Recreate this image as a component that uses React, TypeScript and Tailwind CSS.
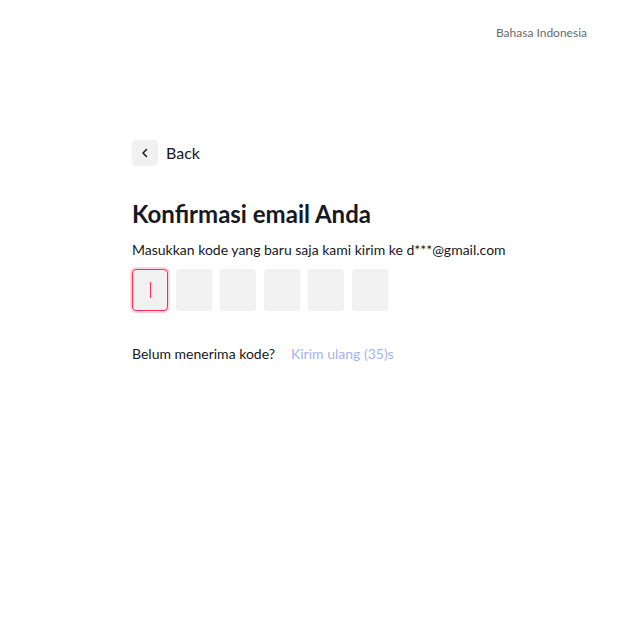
export default function App() {
  const boxes = [0, 1, 2, 3, 4, 5];
  return (
    <div className="w-[635px] h-[625px] bg-white relative" style={{ fontFamily: "Lato, 'Open Sans', sans-serif" }}>
      <div className="flex justify-end pt-[26px] pr-[48px]">
        <span className="text-[12px] text-[#6b6b6b] leading-[14px]">Bahasa Indonesia</span>
      </div>
      <div className="pl-[132px] pt-[100px]">
        <div className="flex items-center gap-[8px]">
          <div className="w-[26px] h-[26px] rounded-[4px] bg-[#f1f1f2] flex items-center justify-center">
            <svg width="10" height="10" viewBox="0 0 10 10" fill="none">
              <path d="M6.5 1.5 L3 5 L6.5 8.5" stroke="#161823" strokeWidth="1.5" strokeLinecap="round" strokeLinejoin="round" />
            </svg>
          </div>
          <span className="text-[16px] text-[#161823] leading-[20px]">Back</span>
        </div>
        <h1 className="mt-[34px] text-[24px] font-bold text-[#161823] leading-[28px]">Konfirmasi email Anda</h1>
        <p className="mt-[13px] text-[14px] text-[#161823] leading-[18px]">Masukkan kode yang baru saja kami kirim ke d***@gmail.com</p>
        <div className="mt-[10px] flex gap-[8px]">
          {boxes.map((i) =>
            i === 0 ? (
              <div key={i} className="w-[36px] h-[42px] rounded-[4px] bg-[#f1f1f2] border border-[#fe2c55] shadow-[0_0_0_2px_rgba(254,44,85,0.2)] flex items-center justify-center">
                <div className="w-[1px] h-[16px] bg-[#fe2c55]" />
              </div>
            ) : (
              <div key={i} className="w-[36px] h-[42px] rounded-[4px] bg-[#f1f1f2]" />
            )
          )}
        </div>
        <div className="mt-[34px] flex items-center gap-[16px] text-[14px] leading-[18px]">
          <span className="text-[#161823]">Belum menerima kode?</span>
          <span className="text-[#a3b3f7]">Kirim ulang (35)s</span>
        </div>
      </div>
    </div>
  );
}
